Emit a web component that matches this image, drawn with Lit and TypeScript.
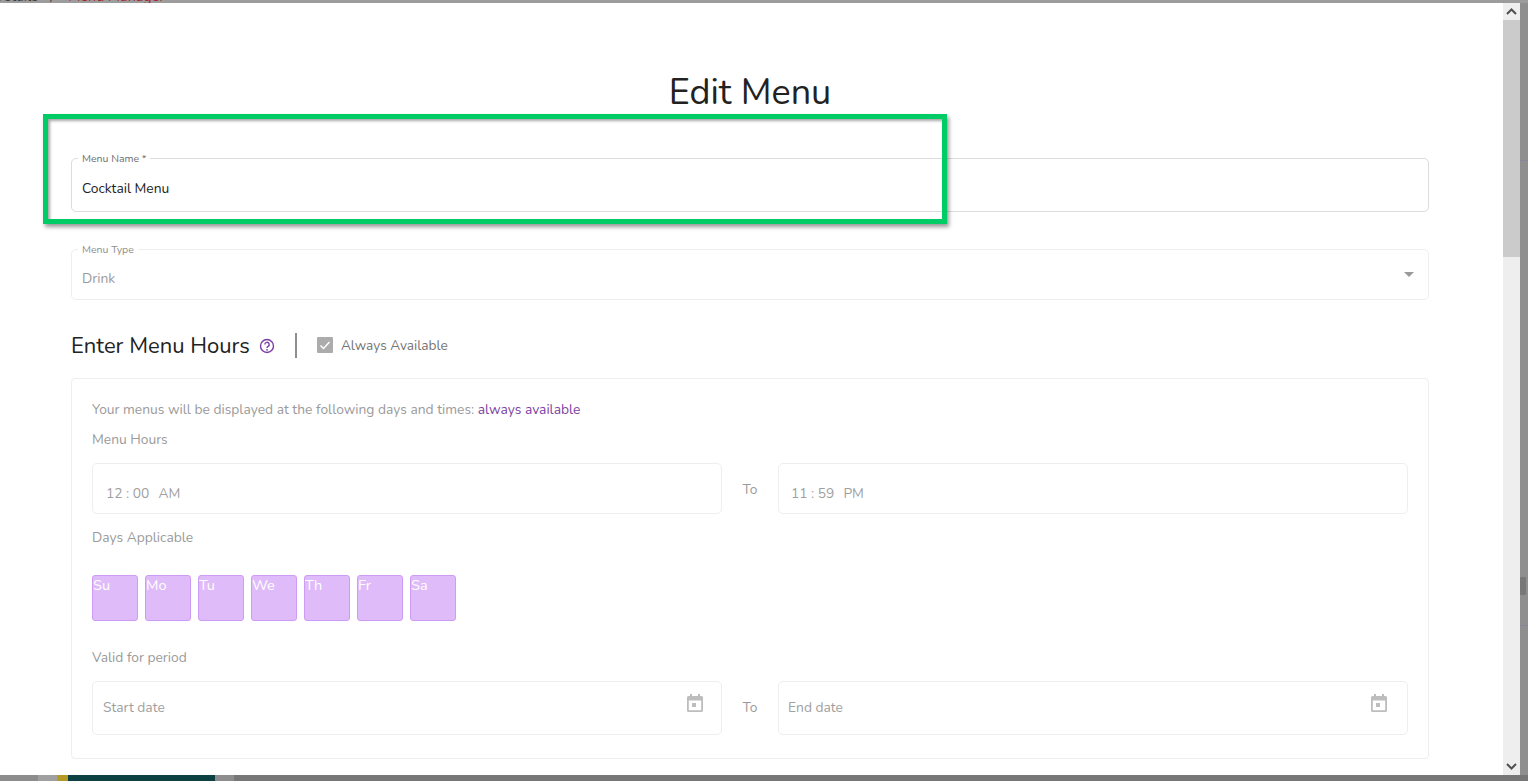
import { LitElement, html, css } from "lit";
import { customElement } from "lit/decorators.js";

const DAYS = ["Su", "Mo", "Tu", "We", "Th", "Fr", "Sa"];

@customElement("app-root")
export class AppRoot extends LitElement {
  static styles = css`
    :host { display: block; width: 1528px; height: 781px; font-family: "Nunito", "Lato", "Noto Sans", sans-serif; }
    * { box-sizing: border-box; }
    .page { position: relative; width: 1528px; height: 781px; overflow: hidden; background: #858585; }
    .crumbs { position: absolute; left: 0; top: 0; height: 3px; width: 1528px; background: #9c9c9c; z-index: 2; overflow: hidden; }
    .crumb-row { display: flex; margin: -13px 0 0 -7px; font-size: 14.3px; line-height: 20px; color: #3d3d3d; white-space: pre; }
    .crumb-row span { margin-left: 12px; }
    .crumb-row b { margin-left: 14px; font-weight: 400; color: #a32020; }
    .right-edge { position: absolute; left: 1520px; top: 3px; width: 8px; height: 772px; background: #8f8f8f; }
    .right-edge i { position: absolute; left: 0; width: 8px; height: 1px; background: #868696; }
    .trash { position: absolute; left: 0; top: 574px; width: 6px; height: 18px; background: #787878; border-radius: 1px; }
    .bottom { position: absolute; left: 0; top: 775px; width: 1528px; height: 6px; display: flex; background: #777; }
    .b1 { width: 38px; background: #8c8c8c; }
    .b2 { width: 19px; background: #a0a0a0; }
    .b3 { width: 11px; background: #b49a24; }
    .b4 { width: 147px; background: #0d4040; }
    .b5 { width: 19px; background: #8d8d8d; }
    .b6 { flex: 1; }
    .modal { position: absolute; left: 0; top: 3px; width: 1520px; height: 772px; background: #fff; display: flex; }
    .content { flex: 1; min-width: 0; padding: 0 74px 0 71px; overflow: hidden; }
    h1 { margin: 67px 0 0; height: 46px; font-size: 36px; line-height: 46px; font-weight: 400; text-align: center; color: #222; }
    .field { position: relative; border-radius: 5px; }
    .name { margin-top: 42px; height: 54px; border: 1px solid #dcdcdc; padding: 0 10px; font-size: 13.8px; line-height: 59px; color: #222; }
    .floating { position: absolute; left: 6px; top: -7px; padding: 0 4px; background: #fff; font-size: 10.5px; line-height: 14px; color: #6e6e6e; }
    .type { margin-top: 37px; height: 51px; border: 1px solid #eeeeee; padding: 0 10px; font-size: 13.8px; line-height: 58px; color: #9a9a9a; }
    .type .floating { color: #8e8e8e; }
    .caret { position: absolute; right: 14px; top: 22px; width: 0; height: 0; border-left: 5px solid transparent; border-right: 5px solid transparent; border-top: 5px solid #9a9a9a; }
    .hours { margin-top: 29px; height: 32px; display: flex; align-items: center; }
    h2 { margin: 0; padding-top: 2px; font-size: 22px; line-height: 30px; font-weight: 400; color: #222; }
    .help { margin: 2px 0 0 9px; width: 16px; height: 16px; display: block; }
    .sep { margin-left: 20px; width: 2px; height: 25px; background: #8f8f8f; }
    .check { margin-left: 20px; width: 16px; height: 16px; background: #acacac; border-radius: 1px; display: block; }
    .always { margin-left: 8px; font-size: 13.7px; color: #757575; }
    .panel { margin-top: 17px; height: 381px; border: 1px solid #eeeeee; border-radius: 4px; padding: 21px 20px 0; font-size: 13.8px; color: #9a9a9a; }
    .line { height: 20px; line-height: 20px; }
    .line em { font-style: normal; color: #7b3fa3; }
    .mh { margin-top: 10px; }
    .row { display: grid; grid-template-columns: 630px 56px 630px; align-items: center; text-align: center; }
    .time-row { margin-top: 13px; height: 51px; }
    .box { position: relative; border: 1px solid #eeeeee; border-radius: 5px; text-align: left; }
    .time { height: 51px; padding-left: 13px; line-height: 59px; display: flex; gap: 9px; color: #a0a0a0; }
    .time-b { padding-left: 12px; }
    .to { position: relative; color: #9a9a9a; }
    .time-row .to { top: 1px; }
    .date-row .to { top: -1px; }
    .da { margin-top: 14px; }
    .days { margin-top: 27px; display: flex; gap: 7px; }
    .day { width: 46px; height: 46px; background: #e0bbfa; border: 1px solid #cf9cf5; border-radius: 3px; color: #fff; font-size: 14.5px; line-height: 18px; }
    .vp { margin-top: 27px; }
    .date-row { margin-top: 13px; height: 54px; }
    .date { height: 54px; padding-left: 10px; line-height: 52px; color: #a0a0a0; }
    .end { padding-left: 9px; }
    .cal { position: absolute; right: 17px; top: 12px; width: 18px; height: 18px; display: block; }
    .end .cal { right: 19px; }
    .sb { width: 17px; flex: none; background: #eeeeee; display: flex; flex-direction: column; align-items: center; }
    .arrow { height: 17px; width: 17px; display: flex; align-items: center; justify-content: center; flex: none; }
    .thumb { height: 237px; width: 17px; background: #cbcbcb; flex: none; }
    .track { flex: 1; }
    .arrow svg { display: block; }
    .mark { position: absolute; left: 43px; top: 114px; width: 904px; height: 110px; border: 5px solid #00cc66; box-shadow: 2px 3px 4px rgba(0,0,0,.4), inset 2px 2px 3px rgba(0,0,0,.35); pointer-events: none; }
  `;

  private cal() {
    return html`<svg class="cal" viewBox="0 0 18 18"><path fill="#bdbdbd" d="M4 0h2v2h6V0h2v2h1.500A1.500 1.500 0 0 1 17 3.500v13a1.500 1.500 0 0 1-1.500 1.500h-13A1.500 1.500 0 0 1 1 16.500v-13A1.500 1.500 0 0 1 2.500 2H4zM2.800 6.500v9.700h12.400V6.500zM6 9h4v4H6z"/></svg>`;
  }

  render() {
    return html`<div class="page">
      <div class="crumbs"><div class="crumb-row">Details<span>/</span><b>Menu Manager</b></div></div>
      <div class="right-edge"><i style="top:157px"></i><i style="top:622px"></i><div class="trash"></div></div>
      <div class="bottom"><div class="b1"></div><div class="b2"></div><div class="b3"></div><div class="b4"></div><div class="b5"></div><div class="b6"></div></div>
      <div class="modal">
        <div class="content">
          <h1>Edit Menu</h1>
          <div class="field name"><span class="floating">Menu Name *</span>Cocktail Menu</div>
          <div class="field type"><span class="floating">Menu Type</span>Drink<span class="caret"></span></div>
          <div class="hours">
            <h2>Enter Menu Hours</h2>
            <svg class="help" viewBox="0 0 16 16"><circle cx="8" cy="8" r="6.500" fill="none" stroke="#7b3fa3" stroke-width="1.400"/><path fill="none" stroke="#7b3fa3" stroke-width="1.400" d="M5.800 6.500a2.200 2.200 0 1 1 3.300 1.900c-.8.500-1.100.9-1.100 1.700"/><circle cx="8" cy="11.800" r=".9" fill="#7b3fa3"/></svg>
            <div class="sep"></div>
            <svg class="check" viewBox="0 0 16 16"><path fill="none" stroke="#fff" stroke-width="1.500" d="M3.500 8.500l3 3 6-6.500"/></svg>
            <span class="always">Always Available</span>
          </div>
          <div class="panel">
            <div class="line">Your menus will be displayed at the following days and times: <em>always available</em></div>
            <div class="line mh">Menu Hours</div>
            <div class="row time-row">
              <div class="box time"><span>12 : 00</span><span>AM</span></div>
              <span class="to">To</span>
              <div class="box time time-b"><span>11 : 59</span><span>PM</span></div>
            </div>
            <div class="line da">Days Applicable</div>
            <div class="days">${DAYS.map((d) => html`<div class="day">${d}</div>`)}</div>
            <div class="line vp">Valid for period</div>
            <div class="row date-row">
              <div class="box date">Start date${this.cal()}</div>
              <span class="to">To</span>
              <div class="box date end">End date${this.cal()}</div>
            </div>
          </div>
        </div>
        <div class="sb">
          <div class="arrow"><svg width="11" height="7" viewBox="0 0 11 7"><path fill="none" stroke="#505050" stroke-width="2" d="M1 6l4.500-4.500L10 6"/></svg></div>
          <div class="thumb"></div>
          <div class="track"></div>
          <div class="arrow"><svg width="11" height="7" viewBox="0 0 11 7"><path fill="none" stroke="#505050" stroke-width="2" d="M1 1l4.500 4.500L10 1"/></svg></div>
        </div>
      </div>
      <div class="mark"></div>
    </div>`;
  }
}
